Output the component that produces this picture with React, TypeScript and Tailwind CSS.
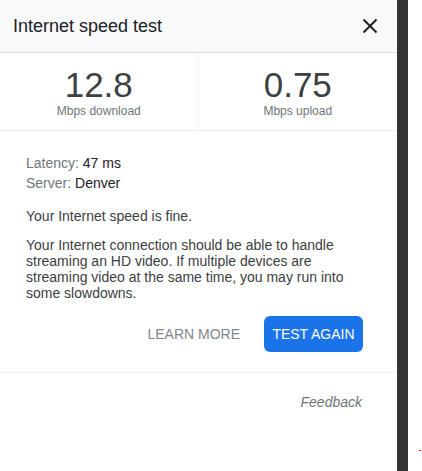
export default function App() {
  const font = { fontFamily: '"Liberation Sans", Arial, sans-serif' };
  return (
    <div className="flex h-[471px] w-[422px] bg-white" style={font}>
      {/* speed test card */}
      <div className="flex w-[397px] flex-col bg-white">
        <div className="flex h-[53px] items-center justify-between border-b border-[#dadce0] bg-[#f8f9fa] pl-[13px] pr-[19px]">
          <span className="text-[18px] leading-[24px] text-[#202124]">Internet speed test</span>
          <svg width="16" height="16" viewBox="0 0 16 16" className="text-[#202124]">
            <path d="M1.5 1.5 L14.5 14.5 M14.5 1.5 L1.5 14.5" stroke="currentColor" strokeWidth="2" fill="none" />
          </svg>
        </div>

        <div className="grid grid-cols-2 border-b border-[#eeeeee]">
          <div className="flex flex-col items-center border-r border-[#eeeeee] pt-[15px] pb-[13px]">
            <span className="text-[35px] leading-[34px] text-[#3c4043]">12.8</span>
            <span className="mt-[3px] text-[12px] leading-[12px] text-[#70757a]">Mbps download</span>
          </div>
          <div className="flex flex-col items-center pt-[15px] pb-[13px]">
            <span className="text-[35px] leading-[34px] text-[#3c4043]">0.75</span>
            <span className="mt-[3px] text-[12px] leading-[12px] text-[#70757a]">Mbps upload</span>
          </div>
        </div>

        <div className="border-b border-[#f1f1f1] px-[26px] pt-[22px] pb-[20px] text-[14px] text-[#3c4043]">
          <div className="leading-[20px]">
            <span className="text-[#70757a]">Latency:</span> <span className="text-[#202124]">47 ms</span>
          </div>
          <div className="leading-[20px]">
            <span className="text-[#70757a]">Server:</span> <span className="text-[#202124]">Denver</span>
          </div>
          <p className="mt-[15px] leading-[16px]">Your Internet speed is fine.</p>
          <p className="mt-[13px] leading-[16px]">
            Your Internet connection should be able to handle streaming an HD video. If multiple devices are streaming
            video at the same time, you may run into some slowdowns.
          </p>
          <div className="mt-[15px] flex items-center justify-end gap-[24px] pr-[8px]">
            <span className="text-[14px] text-[#80868b]">LEARN MORE</span>
            <button className="h-[36px] w-[99px] rounded-[6px] bg-[#1a73e8] text-[14px] text-white">TEST AGAIN</button>
          </div>
        </div>

        <div className="flex justify-end pt-[19px] pr-[35px]">
          <span className="text-[14px] italic leading-[20px] text-[#70757a]">Feedback</span>
        </div>
      </div>

      {/* scrollbar strip */}
      <div className="h-full w-[11px] bg-[#333333]" />

      <div className="flex flex-1 flex-col">
        <div className="ml-[11px] mt-[450px] h-[1px] w-[2px] bg-[#ff0000]" />
      </div>
    </div>
  );
}
